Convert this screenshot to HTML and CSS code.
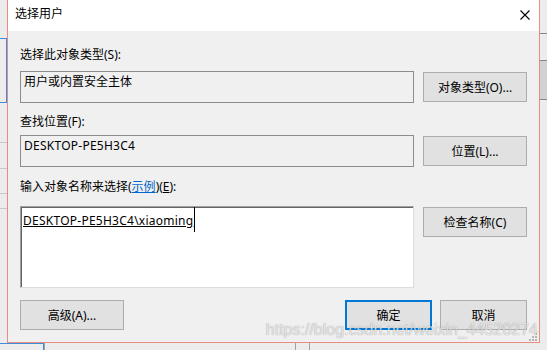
FILE: index.html
```html
<!DOCTYPE html>
<html lang="zh-CN">
<head>
    <meta charset="UTF-8">
    <meta name="viewport" content="width=device-width, initial-scale=1.0">
    <title>选择用户</title>
    <link rel="stylesheet" href="styles.css">
</head>
<body>

    <div class="screen">
        <div class="dialog">
            <div class="titlebar">
                <span class="title">选择用户</span>
                <svg class="close" width="10" height="10" viewBox="0 0 10 10">
                    <path d="M0.5 0.5 L9.5 9.5 M9.5 0.5 L0.5 9.5" stroke="#000" stroke-width="1.1" fill="none"/>
                </svg>
            </div>

            <div class="content">
                <div class="label l1">选择此对象类型(S):</div>
                <div class="row">
                    <div class="field">用户或内置安全主体</div>
                    <button class="btn">对象类型(O)...</button>
                </div>

                <div class="label l2">查找位置(F):</div>
                <div class="row">
                    <div class="field latin">DESKTOP-PE5H3C4</div>
                    <button class="btn">位置(L)...</button>
                </div>

                <div class="label l3">输入对象名称来选择(<span class="link">示例</span>)(<u>E</u>):</div>
                <div class="row top">
                    <div class="edit">
                        <span class="resolved latin">DESKTOP-PE5H3C4\xiaoming</span>
                        <span class="caret"></span>
                    </div>
                    <button class="btn check">检查名称(C)</button>
                </div>

                <div class="footer">
                    <button class="btn wide">高级(A)...</button>
                    <div class="actions">
                        <button class="btn action primary">确定</button>
                        <button class="btn action">取消</button>
                    </div>
                </div>
            </div>

            <svg class="grip" width="8" height="8" viewBox="0 0 8 8">
                <rect x="6" y="0" width="2" height="2" fill="#b4b4b4"/>
                <rect x="3" y="3" width="2" height="2" fill="#b4b4b4"/>
                <rect x="6" y="3" width="2" height="2" fill="#b4b4b4"/>
                <rect x="0" y="6" width="2" height="2" fill="#b4b4b4"/>
                <rect x="3" y="6" width="2" height="2" fill="#b4b4b4"/>
                <rect x="6" y="6" width="2" height="2" fill="#b4b4b4"/>
            </svg>
        </div>

        <div class="watermark">https://blog.csdn.net/weixin_44520274</div>
    </div>

</body>
</html>
```

FILE: styles.css
```css
body {
    margin: 0;
    background-color: #ececec;
    font-family: 'Noto Sans', 'Noto Sans CJK SC', sans-serif;
    font-size: 12px;
    color: #000;
}

.screen {
    position: relative;
    width: 547px;
    height: 350px;
    overflow: hidden;
    background:
        linear-gradient(#3c8ddc, #3c8ddc) 6px 38px / 1px 65px no-repeat,
        linear-gradient(#3c8ddc, #3c8ddc) 0 38px / 7px 1px no-repeat,
        linear-gradient(#3c8ddc, #3c8ddc) 0 102px / 7px 1px no-repeat,
        linear-gradient(#c8c8c8, #c8c8c8) 0 142px / 7px 1px no-repeat,
        linear-gradient(#c8c8c8, #c8c8c8) 0 168px / 7px 1px no-repeat,
        linear-gradient(#c8c8c8, #c8c8c8) 0 193px / 7px 1px no-repeat,
        linear-gradient(#c8c8c8, #c8c8c8) 0 208px / 7px 1px no-repeat,
        linear-gradient(#888, #888) 540px 33px / 7px 1px no-repeat,
        linear-gradient(#888, #888) 540px 60px / 7px 1px no-repeat,
        linear-gradient(#d2d2d2, #d2d2d2) 540px 61px / 7px 38px no-repeat,
        linear-gradient(#888, #888) 540px 99px / 7px 1px no-repeat,
        linear-gradient(#3c8ddc, #3c8ddc) 0 343px / 44px 1px no-repeat,
        linear-gradient(#3c8ddc, #3c8ddc) 43px 343px / 1px 7px no-repeat,
        linear-gradient(#a0a0a0, #a0a0a0) 44px 343px / 1px 7px no-repeat,
        linear-gradient(#a0a0a0, #a0a0a0) 295px 343px / 1px 7px no-repeat,
        linear-gradient(#a0a0a0, #a0a0a0) 309px 343px / 1px 7px no-repeat,
        #ececec;
}

.dialog {
    position: relative;
    margin-left: 7px;
    width: 531px;
    height: 342px;
    border: 1px solid #ec8c80;
    border-top: none;
    background-color: #f0f0f0;
}

.titlebar {
    height: 31px;
    background-color: #fff;
    display: flex;
    align-items: flex-start;
    justify-content: space-between;
    padding: 0 9px 0 7px;
}

.title {
    margin-top: 6px;
    line-height: 16px;
}

.close {
    margin-top: 10px;
}

.content {
    padding: 16px 12px 0;
}

.label {
    height: 16px;
    line-height: 16px;
    white-space: nowrap;
}

.l1 { margin-bottom: 8px; }
.l2 { margin-top: 11px; margin-bottom: 5px; }
.l3 { margin-top: 12px; margin-bottom: 11px; }

.link {
    color: #0066cc;
    text-decoration: underline;
}

.latin {
    letter-spacing: 0.25px;
}

.row {
    display: grid;
    grid-template-columns: 394px 104px;
    column-gap: 9px;
    align-items: center;
}

.row.top {
    align-items: start;
}

.field {
    height: 32px;
    box-sizing: border-box;
    border: 1px solid #8c8c8c;
    padding: 2px 3px;
    line-height: 16px;
    white-space: nowrap;
}

.edit {
    position: relative;
    height: 82px;
    box-sizing: border-box;
    background-color: #fff;
    border: 1px solid;
    border-color: #a0a0a0 #dcdcdc #dcdcdc #a0a0a0;
    box-shadow: inset 1px 1px 0 #646464;
    padding: 6px 2px;
    line-height: 16px;
}

.resolved {
    text-decoration: underline;
}

.caret {
    position: absolute;
    left: 173px;
    top: 0;
    width: 1px;
    height: 25px;
    background-color: #000;
}

.btn {
    height: 30px;
    box-sizing: border-box;
    padding: 0;
    background-color: #e1e1e1;
    border: 1px solid #adadad;
    font: inherit;
    color: #000;
    white-space: nowrap;
}

.check {
    margin-top: 1px;
}

.footer {
    display: flex;
    justify-content: space-between;
    margin-top: 12px;
}

.wide {
    width: 104px;
}

.actions {
    display: flex;
    gap: 8px;
}

.action {
    width: 87px;
}

.primary {
    border: 2px solid #0078d7;
}

.grip {
    position: absolute;
    right: 2px;
    bottom: 1px;
}

.watermark {
    position: absolute;
    right: 9px;
    top: 321px;
    font-family: 'Liberation Sans', sans-serif;
    font-size: 16px;
    line-height: 18px;
    color: rgba(255, 255, 255, 0.75);
    text-shadow: 0 0 1px rgba(0, 0, 0, 0.45);
    white-space: nowrap;
}
```
